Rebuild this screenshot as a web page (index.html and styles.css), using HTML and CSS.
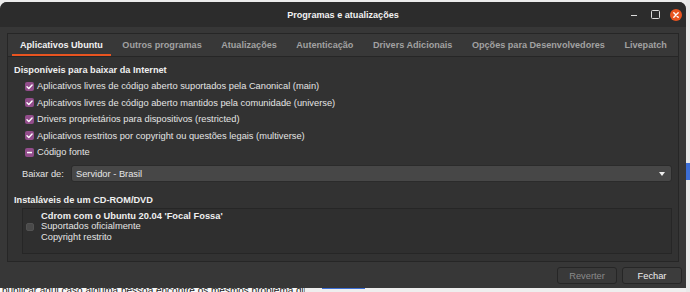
FILE: index.html
```html
<!DOCTYPE html>
<html lang="pt-BR">
<head>
<meta charset="utf-8">
<title>Programas e atualizações</title>
<link rel="stylesheet" href="styles.css">
</head>
<body>
<div class="screen">
  <div class="window">
    <header class="titlebar">
      <span class="title">Programas e atualizações</span>
      <div class="controls">
        <span class="ctl min"></span>
        <span class="ctl max"></span>
        <span class="ctl close">
          <svg width="12" height="12" viewBox="0 0 12 12"><circle cx="6" cy="6" r="6" fill="#e95420"/><path d="M3.8 3.8 L8.2 8.2 M8.2 3.8 L3.8 8.2" stroke="#fff" stroke-width="1.4" stroke-linecap="round"/></svg>
        </span>
      </div>
    </header>
    <div class="notebook">
      <nav class="tabs">
        <span class="tab active">Aplicativos Ubuntu</span>
        <span class="tab">Outros programas</span>
        <span class="tab">Atualizações</span>
        <span class="tab">Autenticação</span>
        <span class="tab">Drivers Adicionais</span>
        <span class="tab">Opções para Desenvolvedores</span>
        <span class="tab">Livepatch</span>
      </nav>
      <div class="page">
        <h3 class="section">Disponíveis para baixar da Internet</h3>
        <ul class="checks">
          <li><span class="cb on"><svg width="9" height="9" viewBox="0 0 9 9"><path d="M2 4.7 L3.8 6.4 L7.1 2.9" fill="none" stroke="#fff" stroke-width="1.4" stroke-linecap="round" stroke-linejoin="round"/></svg></span>Aplicativos livres de código aberto suportados pela Canonical (main)</li>
          <li><span class="cb on"><svg width="9" height="9" viewBox="0 0 9 9"><path d="M2 4.7 L3.8 6.4 L7.1 2.9" fill="none" stroke="#fff" stroke-width="1.4" stroke-linecap="round" stroke-linejoin="round"/></svg></span>Aplicativos livres de código aberto mantidos pela comunidade (universe)</li>
          <li><span class="cb on"><svg width="9" height="9" viewBox="0 0 9 9"><path d="M2 4.7 L3.8 6.4 L7.1 2.9" fill="none" stroke="#fff" stroke-width="1.4" stroke-linecap="round" stroke-linejoin="round"/></svg></span>Drivers proprietários para dispositivos (restricted)</li>
          <li><span class="cb on"><svg width="9" height="9" viewBox="0 0 9 9"><path d="M2 4.7 L3.8 6.4 L7.1 2.9" fill="none" stroke="#fff" stroke-width="1.4" stroke-linecap="round" stroke-linejoin="round"/></svg></span>Aplicativos restritos por copyright ou questões legais (multiverse)</li>
          <li><span class="cb on"><svg width="9" height="9" viewBox="0 0 9 9"><rect x="2" y="3.8" width="5" height="1.5" fill="#fff"/></svg></span>Código fonte</li>
        </ul>
        <div class="download">
          <span class="label">Baixar de:</span>
          <div class="combo"><span>Servidor - Brasil</span><span class="arrow"></span></div>
        </div>
        <h3 class="section cd">Instaláveis de um CD-ROM/DVD</h3>
        <div class="cdframe">
          <div class="cd-item">
            <span class="cb off"></span>
            <div class="cd-text">
              <b>Cdrom com o Ubuntu 20.04 'Focal Fossa'</b>
              <span>Suportados oficialmente</span>
              <span>Copyright restrito</span>
            </div>
          </div>
        </div>
      </div>
    </div>
    <div class="actions">
      <button class="btn disabled">Reverter</button>
      <button class="btn">Fechar</button>
    </div>
  </div>
  <div class="side"><div class="blue"></div></div>
  <div class="strip">
    <p class="strip-text">publicar aqui caso alguma pessoa encontre os mesmos problema que</p>
    <div class="strip-rest"><span class="strip-link"></span></div>
  </div>
</div>
</body>
</html>
```
FILE: styles.css
```css
* { box-sizing: border-box; }
html, body { margin: 0; padding: 0; }
body {
  width: 690px;
  height: 292px;
  overflow: hidden;
  background: #ececec;
  font-family: "Liberation Sans", Arial, sans-serif;
}
.screen {
  display: grid;
  grid-template-columns: 686px 4px;
  grid-template-rows: 288px 4px;
  width: 690px;
  height: 292px;
}
.window {
  grid-column: 1;
  grid-row: 1;
  margin-top: 2px;
  display: flex;
  flex-direction: column;
  background: #373737;
  border-radius: 7px 7px 0 0;
  overflow: hidden;
}
.titlebar {
  height: 25px;
  flex: none;
  background: #2c2c2c;
  display: grid;
  grid-template-columns: 1fr auto 1fr;
  align-items: center;
}
.title {
  grid-column: 2;
  color: #f2f2f2;
  font-weight: bold;
  font-size: 9.1px;
}
.controls {
  grid-column: 3;
  justify-self: end;
  display: flex;
  gap: 9px;
  padding-right: 4px;
  align-items: center;
}
.ctl {
  width: 12px;
  height: 12px;
  display: flex;
  align-items: center;
  justify-content: center;
}
.ctl.min::before {
  content: "";
  width: 6px;
  height: 1.5px;
  margin-top: 2px;
  background: #dcdcdc;
}
.ctl.max::before {
  content: "";
  width: 7px;
  height: 7px;
  border: 1.5px solid #dcdcdc;
  border-radius: 1.5px;
}
.ctl svg { display: block; }

.notebook {
  flex: none;
  height: 229px;
  margin: 6px 7px 0 7px;
  border: 1px solid #262626;
  background: #323232;
  display: flex;
  flex-direction: column;
}
.tabs {
  height: 23px;
  flex: none;
  display: flex;
  gap: 3.5px;
  padding-left: 4px;
  background: #383838;
  border-bottom: 1px solid #262626;
}
.tab {
  display: flex;
  align-items: center;
  padding: 0 8px;
  font-weight: bold;
  font-size: 9.1px;
  color: #a2a2a2;
}
.tab.active {
  color: #f2f2f2;
  box-shadow: inset 0 -2px 0 #e95420;
}
.page {
  padding: 7px 6px 0 6px;
  color: #e6e6e6;
}
.section {
  margin: 0;
  font-weight: bold;
  font-size: 9.2px;
  line-height: 12px;
  color: #efefef;
}
.checks {
  list-style: none;
  margin: 1.75px 0 0;
  padding: 0 0 0 11px;
}
.checks li {
  height: 16.5px;
  display: flex;
  align-items: center;
  gap: 3px;
  font-size: 9.3px;
  color: #e4e4e4;
}
.cb {
  width: 9px;
  height: 9px;
  flex: none;
  border-radius: 2px;
  display: flex;
}
.cb.on { background: #924d8b; }
.cb svg { display: block; }
.cb.off {
  width: 8px;
  height: 8px;
  background: #4a4a4a;
  border: 1px solid #525252;
}
.download {
  display: flex;
  align-items: center;
  margin-top: 4.75px;
  padding-left: 8px;
  font-size: 9.3px;
}
.label {
  width: 49px;
  flex: none;
  color: #e4e4e4;
}
.combo {
  flex: 1;
  height: 17px;
  display: flex;
  align-items: center;
  justify-content: space-between;
  padding: 0 6px 0 4px;
  background: #474747;
  border: 1px solid #2b2b2b;
  border-radius: 3px;
  color: #e8e8e8;
}
.arrow {
  width: 0;
  height: 0;
  border-left: 3px solid transparent;
  border-right: 3px solid transparent;
  border-top: 4px solid #eeeeee;
}
.section.cd { margin-top: 12px; }
.cdframe {
  margin: 2px 0 0 8px;
  height: 46px;
  border: 1px solid #262626;
  background: #2f2f2f;
  padding: 1.7px 0 0 3px;
}
.cd-item {
  display: flex;
  align-items: center;
  gap: 7px;
}
.cd-text {
  display: flex;
  flex-direction: column;
  font-size: 9.3px;
  line-height: 10.7px;
  color: #e4e4e4;
}
.cd-text b { color: #f0f0f0; }

.actions {
  flex: none;
  display: flex;
  justify-content: flex-end;
  gap: 5px;
  padding: 5px 4px 0 0;
}
.btn {
  width: 60px;
  height: 17px;
  padding: 0;
  font-family: "Liberation Sans", Arial, sans-serif;
  font-size: 9.3px;
  color: #eeeeee;
  background: #3c3c3c;
  border: 1px solid #262626;
  border-radius: 3px;
}
.btn.disabled {
  color: #8a8a8a;
  background: #393939;
}

.side {
  grid-column: 2;
  grid-row: 1 / 3;
  background: #e9e9e9;
  padding-top: 163px;
}
.blue {
  height: 17px;
  background: #3d6fd6;
}
.strip {
  grid-column: 1;
  grid-row: 2;
  display: flex;
  overflow: hidden;
  background: #f8f8f8;
}
.strip-text {
  width: 305px;
  flex: none;
  margin: -3.5px 0 0 0;
  padding-left: 2px;
  font-size: 10px;
  line-height: 11px;
  white-space: nowrap;
  overflow: hidden;
  color: #222;
  border-right: 1px solid #9a9a9a;
}
.strip-rest {
  flex: 1;
  background: #eeeeee;
  padding-left: 17px;
}
.strip-link {
  display: block;
  width: 43px;
  height: 1px;
  background: #3d6fd6;
}
```
